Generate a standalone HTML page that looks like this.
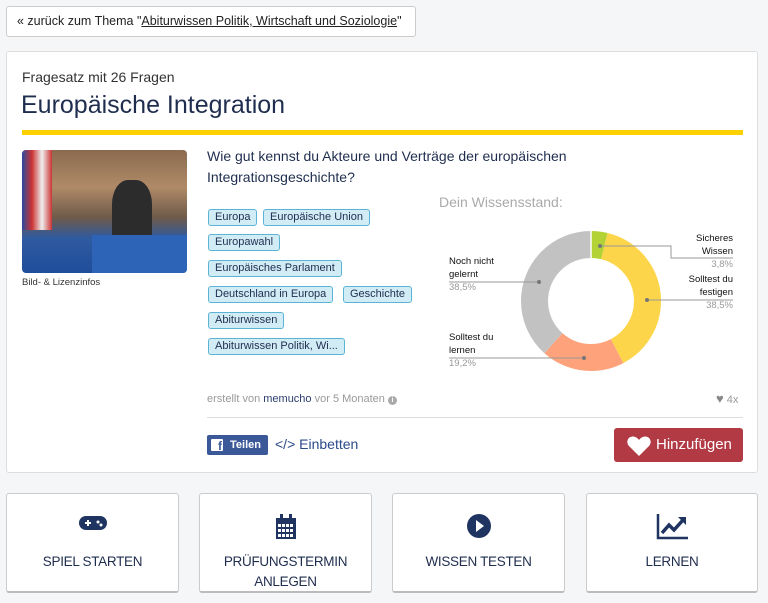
<!DOCTYPE html>
<html><head><meta charset="utf-8"><style>
*{margin:0;padding:0;box-sizing:border-box}
body{width:768px;height:603px;background:#f5f6f8;font-family:"Liberation Sans",sans-serif;color:#1f2d4e;position:relative;overflow:hidden}
.a{position:absolute}
.back{left:6px;top:6px;width:410px;height:31px;background:#fff;border:1px solid #ccc;border-radius:3px;font-size:12.5px;padding:7px 0 0 10px;color:#222}
.back u{color:#222}
.card{left:6px;top:51px;width:752px;height:422px;background:#fff;border:1px solid #ddd;border-radius:3px}
.tag{position:absolute;height:17px;border:1px solid #5bb4d4;background:#d2ecf6;border-radius:3px;font-size:11px;padding:1px 6px 0 6px;color:#1f2d4e;white-space:nowrap}
.btn{position:absolute;top:493px;height:100px;background:#fff;border:1px solid #ccc;border-bottom:2px solid #bbb;border-radius:3px;text-align:center;font-size:13.5px;letter-spacing:-0.3px;color:#1f2d4e}
.btn .t{position:absolute;left:0;right:0;top:58px;line-height:20px}
.btn svg{position:absolute;left:50%;top:20px;transform:translateX(-50%)}
.lbl{position:absolute;font-size:9.5px;color:#111;line-height:13px}
.pct{color:#999}
</style></head><body>
<div class="a back">« zurück zum Thema "<u>Abiturwissen Politik, Wirtschaft und Soziologie</u>"</div>
<div class="a card"></div>
<div class="a" style="left:22px;top:69px;font-size:14px;color:#333">Fragesatz mit 26 Fragen</div>
<div class="a" style="left:21px;top:91px;font-size:25px;color:#1f2d4e">Europäische Integration</div>
<div class="a" style="left:22px;top:130px;width:721px;height:5px;background:#fdd100"></div>
<div class="a" style="left:22px;top:150px;width:165px;height:123px;border-radius:4px;overflow:hidden;background:linear-gradient(180deg,#8a6a4f 0%,#b08a68 30%,#6e5a4a 55%,#2f5aa0 72%,#1f4d9a 100%)">
 <div class="a" style="left:0;top:0;width:30px;height:80px;background:linear-gradient(90deg,#2a4aa0,#c33,#eee,#c33)"></div>
 <div class="a" style="left:90px;top:30px;width:40px;height:60px;background:#2c2c2c;border-radius:40% 40% 10% 10%"></div>
 <div class="a" style="left:70px;top:85px;width:95px;height:38px;background:#2d64b8"></div>
</div>
<div class="a" style="left:22px;top:277px;font-size:9.5px;color:#333">Bild- &amp; Lizenzinfos</div>
<div class="a" style="left:207px;top:146px;font-size:14px;line-height:21px;color:#1f2d4e;width:420px">Wie gut kennst du Akteure und Verträge der europäischen Integrationsgeschichte?</div>
<div class="tag" style="left:208px;top:209px">Europa</div>
<div class="tag" style="left:263px;top:209px">Europäische Union</div>
<div class="tag" style="left:208px;top:234px">Europawahl</div>
<div class="tag" style="left:208px;top:260px">Europäisches Parlament</div>
<div class="tag" style="left:208px;top:286px">Deutschland in Europa</div>
<div class="tag" style="left:343px;top:286px">Geschichte</div>
<div class="tag" style="left:208px;top:312px">Abiturwissen</div>
<div class="tag" style="left:208px;top:338px">Abiturwissen Politik, Wi...</div>
<div class="a" style="left:439px;top:194px;font-size:14px;color:#aaa">Dein Wissensstand:</div>
<svg class="a" style="left:420px;top:180px" width="348" height="230">
<g transform="translate(171,121) rotate(-90)" fill="none" stroke-width="27">
<circle r="56.5" stroke="#b2d235" stroke-dasharray="13.5 400"/>
<circle r="56.5" stroke="#fdd54a" stroke-dasharray="0 13.5 136.7 400"/>
<circle r="56.5" stroke="#fea27b" stroke-dasharray="0 150.2 68.2 400"/>
<circle r="56.5" stroke="#c2c2c2" stroke-dasharray="0 218.4 136.7 400"/>
</g>
<g stroke="#fff" stroke-width="1.5"><line x1="171" y1="51" x2="171" y2="79"/></g>
<g stroke="#999" fill="none"><polyline points="180,66 251,66 251,78 313,78"/><line x1="227" y1="120" x2="313" y2="120"/><line x1="29" y1="102" x2="119" y2="102"/><line x1="29" y1="178" x2="164" y2="178"/></g>
<g fill="#777"><circle cx="180" cy="66" r="2"/><circle cx="227" cy="120" r="2"/><circle cx="119" cy="102" r="2"/><circle cx="164" cy="178" r="2"/></g>
</svg>
<div class="lbl" style="left:680px;top:232px;width:53px;text-align:right">Sicheres Wissen<br><span class="pct">3,8%</span></div>
<div class="lbl" style="left:670px;top:273px;width:63px;text-align:right">Solltest du festigen<br><span class="pct">38,5%</span></div>
<div class="lbl" style="left:449px;top:255px">Noch nicht<br>gelernt<br><span class="pct">38,5%</span></div>
<div class="lbl" style="left:449px;top:331px">Solltest du<br>lernen<br><span class="pct">19,2%</span></div>
<div class="a" style="left:207px;top:393px;font-size:11px;color:#999">erstellt von <span style="color:#2b3d6b">memucho</span> vor 5 Monaten <span style="display:inline-block;width:9px;height:9px;border-radius:50%;background:#aaa;color:#fff;font-size:7px;text-align:center;line-height:9px;font-weight:bold">i</span></div>
<div class="a" style="left:716px;top:391px;font-size:11px;color:#999"><span style="color:#888;font-size:13px">♥</span> 4x</div>
<div class="a" style="left:207px;top:417px;width:536px;height:1px;background:#ddd"></div>
<div class="a" style="left:207px;top:435px;width:61px;height:20px;background:#3b5998;border-radius:2px"></div>
<div class="a" style="left:211px;top:439px;width:12px;height:12px;background:#fff;border-radius:1px;color:#3b5998;font-size:12px;font-weight:bold;text-align:right;line-height:14px;padding-right:1px;overflow:hidden">f</div>
<div class="a" style="left:230px;top:439px;font-size:11px;font-weight:bold;color:#fff">Teilen</div>
<div class="a" style="left:275px;top:436px;font-size:14px;color:#2b4a8a">&lt;/&gt; Einbetten</div>
<div class="a" style="left:614px;top:428px;width:129px;height:34px;background:#b13a45;border-radius:3px"></div>
<svg class="a" style="left:627px;top:435px" width="24" height="21" viewBox="0 0 24 21"><path d="M12 21L2 11C-1 8 0 2 5.5 1.5 8.5 1.3 11 3.5 12 5 13 3.5 15.5 1.3 18.5 1.5 24 2 25 8 22 11z" fill="#fff"/></svg>
<div class="a" style="left:656px;top:436px;font-size:15px;color:#fff">Hinzufügen</div>

<div class="btn" style="left:6px;width:173px"><svg width="28" height="18" viewBox="0 0 28 18"><rect x="0" y="2" width="28" height="14" rx="7" fill="#1f3461"/><path d="M6 9h6M9 6v6" stroke="#fff" stroke-width="2"/><circle cx="19" cy="8" r="1.5" fill="#fff"/><circle cx="22" cy="11" r="1.5" fill="#fff"/></svg><div class="t">SPIEL STARTEN</div></div>
<div class="btn" style="left:199px;width:173px"><svg width="22" height="26" viewBox="0 0 22 26"><rect x="1" y="4" width="20" height="21" fill="#1f3461"/><rect x="5" y="0" width="3" height="6" fill="#1f3461"/><rect x="14" y="0" width="3" height="6" fill="#1f3461"/><g fill="#fff"><rect x="3" y="10" width="3" height="3"/><rect x="7" y="10" width="3" height="3"/><rect x="11" y="10" width="3" height="3"/><rect x="15" y="10" width="3" height="3"/><rect x="3" y="15" width="3" height="3"/><rect x="7" y="15" width="3" height="3"/><rect x="11" y="15" width="3" height="3"/><rect x="15" y="15" width="3" height="3"/><rect x="3" y="20" width="3" height="3"/><rect x="7" y="20" width="3" height="3"/><rect x="11" y="20" width="3" height="3"/><rect x="15" y="20" width="3" height="3"/></g></svg><div class="t">PRÜFUNGSTERMIN<br>ANLEGEN</div></div>
<div class="btn" style="left:392px;width:173px"><svg width="24" height="24" viewBox="0 0 24 24"><circle cx="12" cy="12" r="12" fill="#1f3461"/><path d="M9 6l8 6-8 6z" fill="#fff"/></svg><div class="t">WISSEN TESTEN</div></div>
<div class="btn" style="left:586px;width:172px"><svg width="32" height="26" viewBox="0 0 32 26"><path d="M2 0v24h30" stroke="#1f3461" stroke-width="2.5" fill="none"/><path d="M6 19l7-8 5 5 9-10" stroke="#1f3461" stroke-width="3.5" fill="none"/><path d="M22 3h8v8z" fill="#1f3461"/></svg><div class="t">LERNEN</div></div>
</body></html>
